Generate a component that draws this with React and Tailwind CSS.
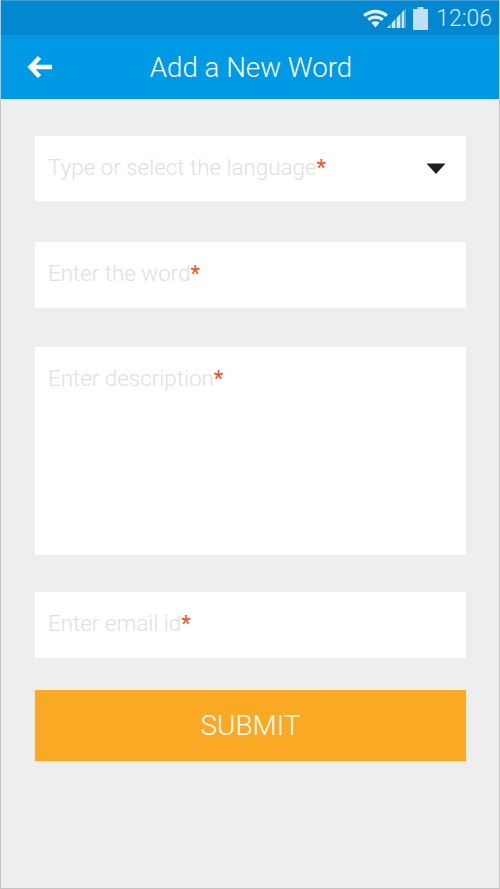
import React from 'react';

function WifiIcon() {
    return (
        <svg width="25" height="20" viewBox="0 0 25 20" className="-mr-[1px]">
            <path d="M0 6.5C7 0 18 0 25 6.5L22.6 9C16.6 4 8.4 4 2.4 9Z" fill="#fff" opacity="0.88" />
            <path d="M4.2 10.6C9 6.6 16 6.6 20.8 10.6L18.6 12.9C15 10 10 10 6.4 12.9Z" fill="#fff" opacity="0.88" />
            <path d="M8.3 14.5C10.8 12.7 14.2 12.7 16.7 14.5L12.5 19.5Z" fill="#fff" opacity="0.88" />
        </svg>
    );
}

function SignalIcon() {
    return (
        <svg width="19" height="20" viewBox="0 0 19 20">
            <path d="M0 20L19 0V20Z" fill="#fff" opacity="0.3" />
            <path d="M0 20L3 16.8V20Z M5 20V14.7L8 11.6V20Z M10 20V9.5L13 6.3V20Z M15 20V4.2L17 2.1V20Z" fill="#fff" opacity="0.72" />
        </svg>
    );
}

function BatteryIcon() {
    return (
        <svg width="15" height="23" viewBox="0 0 15 23">
            <path d="M4.5 0H10.5V2H15V23H0V2H4.5Z" fill="#fff" opacity="0.75" />
        </svg>
    );
}

function Field({ label, className }) {
    return (
        <div className={`bg-white pl-[13px] text-[22.4px] font-light text-[#e0e0e0] ${className}`}>
            {label}
            <span className="font-normal text-[#f4511e]">*</span>
        </div>
    );
}

export default function App() {
    return (
        <div className="w-[500px] h-[889px] flex flex-col bg-[#eeeeee] border-x border-b border-[#c4c4c4] font-['Roboto',sans-serif]">
            <div className="h-[35px] flex items-center justify-end bg-[#0487d1] pr-[7px] border-t border-[#3a9fd8]">
                <WifiIcon />
                <SignalIcon />
                <div className="ml-[7px]">
                    <BatteryIcon />
                </div>
                <span className="ml-[8px] text-[23px] font-light text-[#d8edf9] leading-none">12:06</span>
            </div>

            <div className="relative h-[64px] flex items-center justify-center bg-[#0099e6] pl-[2px] pt-[1px]">
                <svg width="26" height="24" viewBox="0 0 26 24" className="absolute left-[26px] top-[20px]">
                    <path d="M12.5 2.5L3.5 12L12.5 21.5M4 12H25" fill="none" stroke="#fff" strokeWidth="4.5" />
                </svg>
                <span className="text-[27.7px] font-light text-white">Add a New Word</span>
            </div>

            <div className="flex flex-col pl-[34px] pr-[33px] pt-[37px]">
                <div className="relative">
                    <Field label="Type or select the language" className="h-[65px] pt-[15px]" />
                    <svg width="20" height="12" viewBox="0 0 20 12" className="absolute left-[391px] top-[27px]">
                        <path d="M0.5 0.5H19.5L10 11Z" fill="#1f1f1f" />
                    </svg>
                </div>
                <Field label="Enter the word" className="mt-[41px] h-[66px] pt-[15px]" />
                <Field label="Enter description" className="mt-[39px] h-[208px] pt-[15px]" />
                <Field label="Enter email id" className="mt-[37px] h-[66px] pt-[15px]" />
                <button className="mt-[32px] h-[71px] bg-[#faa925] text-[28px] font-light text-white">SUBMIT</button>
            </div>
        </div>
    );
}
